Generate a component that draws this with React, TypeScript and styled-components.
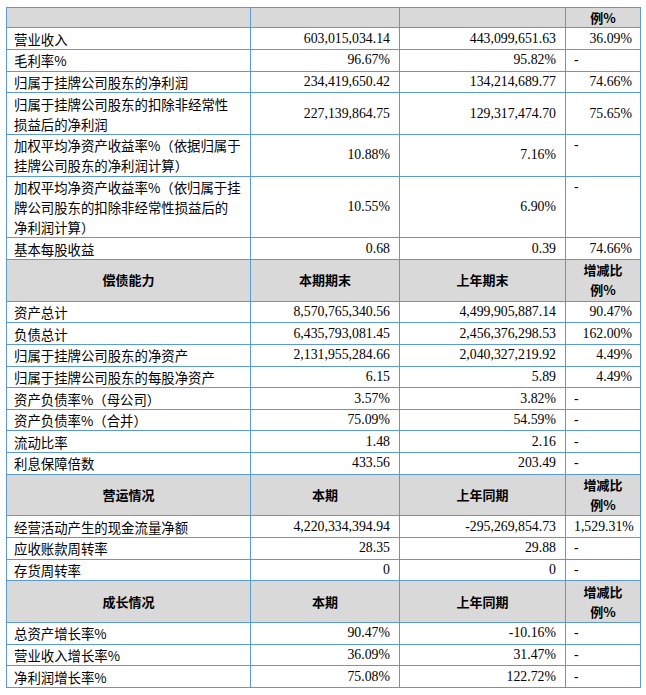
import React, { FC } from 'react';
import styled, { createGlobalStyle } from 'styled-components';

const GlobalStyle = createGlobalStyle`
    html, body {
        margin: 0;
        padding: 0;
        background: #ffffff;
    }
`;

const Page = styled.div`
    padding: 7px 6px 0 6px;
    width: 646px;
    box-sizing: border-box;
`;

const Table = styled.table`
    width: 634px;
    table-layout: fixed;
    border-collapse: collapse;
    font-size: 13.5px;
    line-height: 20px;
    color: #000000;
`;

const Col = styled.col<{ $w: number }>`
    width: ${(p) => p.$w}px;
`;

const Cell = styled.td`
    border: 1px solid #5b9bd5;
    padding: 0.33px 8px 0.33px 7px;
    vertical-align: middle;
    white-space: nowrap;
    line-height: 20px;
`;

const HeaderCell = styled(Cell)<{ $compact?: boolean }>`
    background: #d9d9d9;
    text-align: center;
    font-family: "Noto Sans CJK SC", sans-serif;
    font-weight: 700;
    font-size: 13px;
    padding: ${(p) => (p.$compact ? '0' : '0.33px')} 2px;
    line-height: ${(p) => (p.$compact ? '19.3px' : '20px')};
`;

const LabelCell = styled(Cell)`
    text-align: left;
    font-family: "Noto Sans CJK SC", sans-serif;
    font-size: 13.4px;
`;

const NumCell = styled(Cell)`
    text-align: right;
    padding-right: 9px;
    font-family: "Liberation Serif", serif;
    font-size: 13.8px;
`;

const DeltaCell = styled(Cell)<{ $dash: boolean }>`
    text-align: ${(p) => (p.$dash ? 'left' : 'right')};
    vertical-align: ${(p) => (p.$dash ? 'top' : 'middle')};
    padding-left: 8px;
    padding-right: 8px;
    font-family: "Liberation Serif", serif;
    font-size: 13.8px;
`;

type Row =
    | { kind: 'head'; cells: string[]; compact?: boolean }
    | { kind: 'data'; label: string; cur: string; prev: string; delta: string };

const head = (...cells: string[]): Row => ({ kind: 'head', cells });
const row = (label: string, cur: string, prev: string, delta: string): Row => ({
    kind: 'data',
    label,
    cur,
    prev,
    delta,
});

const rows: Row[] = [
    { kind: 'head', cells: ['', '', '', '例%'], compact: true },
    row('营业收入', '603,015,034.14', '443,099,651.63', '36.09%'),
    row('毛利率%', '96.67%', '95.82%', '-'),
    row('归属于挂牌公司股东的净利润', '234,419,650.42', '134,214,689.77', '74.66%'),
    row('归属于挂牌公司股东的扣除非经常性\n损益后的净利润', '227,139,864.75', '129,317,474.70', '75.65%'),
    row('加权平均净资产收益率%（依据归属于\n挂牌公司股东的净利润计算）', '10.88%', '7.16%', '-'),
    row('加权平均净资产收益率%（依归属于挂\n牌公司股东的扣除非经常性损益后的\n净利润计算）', '10.55%', '6.90%', '-'),
    row('基本每股收益', '0.68', '0.39', '74.66%'),
    head('偿债能力', '本期期末', '上年期末', '增减比\n例%'),
    row('资产总计', '8,570,765,340.56', '4,499,905,887.14', '90.47%'),
    row('负债总计', '6,435,793,081.45', '2,456,376,298.53', '162.00%'),
    row('归属于挂牌公司股东的净资产', '2,131,955,284.66', '2,040,327,219.92', '4.49%'),
    row('归属于挂牌公司股东的每股净资产', '6.15', '5.89', '4.49%'),
    row('资产负债率%（母公司）', '3.57%', '3.82%', '-'),
    row('资产负债率%（合并）', '75.09%', '54.59%', '-'),
    row('流动比率', '1.48', '2.16', '-'),
    row('利息保障倍数', '433.56', '203.49', '-'),
    head('营运情况', '本期', '上年同期', '增减比\n例%'),
    row('经营活动产生的现金流量净额', '4,220,334,394.94', '-295,269,854.73', '1,529.31%'),
    row('应收账款周转率', '28.35', '29.88', '-'),
    row('存货周转率', '0', '0', '-'),
    head('成长情况', '本期', '上年同期', '增减比\n例%'),
    row('总资产增长率%', '90.47%', '-10.16%', '-'),
    row('营业收入增长率%', '36.09%', '31.47%', '-'),
    row('净利润增长率%', '75.08%', '122.72%', '-'),
];

const Lines: FC<{ text: string }> = ({ text }) => (
    <>
        {text.split('\n').map((line, i) => (
            <React.Fragment key={i}>
                {i > 0 && <br />}
                {line}
            </React.Fragment>
        ))}
    </>
);

export default function App() {
    return (
        <Page>
            <GlobalStyle />
            <Table>
                <colgroup>
                    <Col $w={244} />
                    <Col $w={149} />
                    <Col $w={166} />
                    <Col $w={75} />
                </colgroup>
                <tbody>
                    {rows.map((r, i) =>
                        r.kind === 'head' ? (
                            <tr key={i}>
                                {r.cells.map((c, j) => (
                                    <HeaderCell as="th" key={j} $compact={r.compact}>
                                        <Lines text={c} />
                                    </HeaderCell>
                                ))}
                            </tr>
                        ) : (
                            <tr key={i}>
                                <LabelCell>
                                    <Lines text={r.label} />
                                </LabelCell>
                                <NumCell>{r.cur}</NumCell>
                                <NumCell>{r.prev}</NumCell>
                                <DeltaCell $dash={r.delta === '-'}>{r.delta}</DeltaCell>
                            </tr>
                        )
                    )}
                </tbody>
            </Table>
        </Page>
    );
}
